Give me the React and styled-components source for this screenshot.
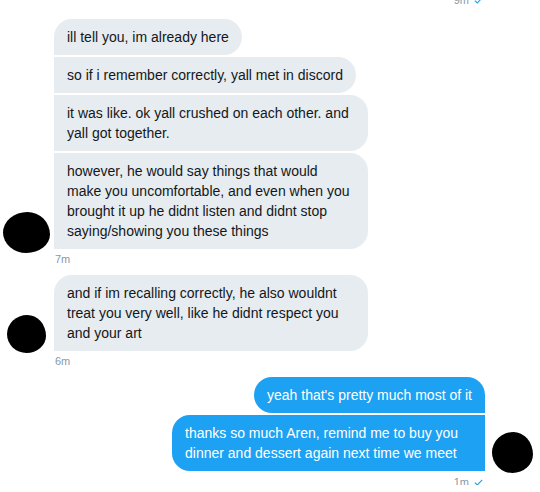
import styled, { createGlobalStyle } from "styled-components";

const GlobalStyle = createGlobalStyle`
  html, body {
    margin: 0;
    padding: 0;
    background: #ffffff;
    overflow: hidden;
  }
  body {
    font-family: "Liberation Sans", Arial, sans-serif;
  }
`;

const Thread = styled.div`
  display: flex;
  flex-direction: column;
  width: 540px;
  height: 492px;
  margin-top: -7px;
`;

const Stamp = styled.div`
  display: flex;
  align-items: center;
  justify-content: ${(p) => (p.right ? "flex-end" : "flex-start")};
  gap: 5px;
  height: 14px;
  font-size: 11px;
  line-height: 14px;
  color: #8899a6;
  margin-top: ${(p) => p.top || 0}px;
  padding-left: ${(p) => (p.right ? 0 : 55)}px;
  padding-right: ${(p) => (p.right ? 57 : 0)}px;
`;

const Group = styled.div`
  display: flex;
  align-items: flex-end;
  justify-content: ${(p) => (p.out ? "flex-end" : "flex-start")};
  margin-top: ${(p) => p.top || 0}px;
`;

const AvatarSlot = styled.div`
  display: flex;
  justify-content: ${(p) => (p.out ? "flex-start" : "center")};
  width: ${(p) => (p.out ? 55 : 54)}px;
  padding-left: ${(p) => (p.out ? 7 : 0)}px;
  box-sizing: border-box;
  flex-shrink: 0;
`;

const Blob = styled.div`
  width: ${(p) => p.w}px;
  height: ${(p) => p.h}px;
  margin-bottom: ${(p) => p.drop}px;
  margin-left: ${(p) => p.shift || 0}px;
  background: #000000;
  border-radius: 52% 48% 50% 50% / 50% 55% 45% 50%;
`;

const Stack = styled.div`
  display: flex;
  flex-direction: column;
  align-items: ${(p) => (p.out ? "flex-end" : "flex-start")};
  gap: 2px;
`;

const Bubble = styled.div`
  box-sizing: border-box;
  width: ${(p) => (p.wide ? `${p.wide}px` : "auto")};
  padding: 8px 13px;
  font-size: 14px;
  line-height: 20px;
  white-space: nowrap;
  background: ${(p) => (p.out ? "#1da1f2" : "#e6ecf0")};
  color: ${(p) => (p.out ? "#ffffff" : "#14171a")};
  border-radius: ${(p) =>
    p.out
      ? `18px ${p.first ? 18 : 0}px 0 18px`
      : `${p.first ? 18 : 0}px 18px 18px 0`};
`;

const Line = styled.span`
  display: block;
`;

function Check() {
  return (
    <svg width="9" height="7" viewBox="0 0 9 7">
      <path
        d="M0.8 3.6 L3.3 6 L8.2 0.8"
        fill="none"
        stroke="#1da1f2"
        strokeWidth="1.1"
      />
    </svg>
  );
}

function Msg({ lines, ...rest }) {
  return (
    <Bubble {...rest}>
      {lines.map((l) => (
        <Line key={l}>{l}</Line>
      ))}
    </Bubble>
  );
}

export default function App() {
  return (
    <>
      <GlobalStyle />
      <Thread>
        <Stamp right>
          9m <Check />
        </Stamp>

        <Group top={12}>
          <AvatarSlot>
            <Blob w={47} h={41} drop={-4} shift={-2} />
          </AvatarSlot>
          <Stack>
            <Msg first lines={["ill tell you, im already here"]} />
            <Msg lines={["so if i remember correctly, yall met in discord"]} />
            <Msg
              wide={314}
              lines={[
                "it was like. ok yall crushed on each other. and",
                "yall got together.",
              ]}
            />
            <Msg
              wide={314}
              lines={[
                "however, he would say things that would",
                "make you uncomfortable, and even when you",
                "brought it up he didnt listen and didnt stop",
                "saying/showing you these things",
              ]}
            />
          </Stack>
        </Group>
        <Stamp top={3}>7m</Stamp>

        <Group top={9}>
          <AvatarSlot>
            <Blob w={39} h={38} drop={-2} shift={-1} />
          </AvatarSlot>
          <Stack>
            <Msg
              first
              wide={314}
              lines={[
                "and if im recalling correctly, he also wouldnt",
                "treat you very well, like he didnt respect you",
                "and your art",
              ]}
            />
          </Stack>
        </Group>
        <Stamp top={3}>6m</Stamp>

        <Group out top={9}>
          <Stack out>
            <Msg out first lines={["yeah that's pretty much most of it"]} />
            <Msg
              out
              wide={313}
              lines={[
                "thanks so much Aren, remind me to buy you",
                "dinner and dessert again next time we meet",
              ]}
            />
          </Stack>
          <AvatarSlot out>
            <Blob w={41} h={41} drop={-2} />
          </AvatarSlot>
        </Group>
        <Stamp right top={4}>
          1m <Check />
        </Stamp>
      </Thread>
    </>
  );
}
